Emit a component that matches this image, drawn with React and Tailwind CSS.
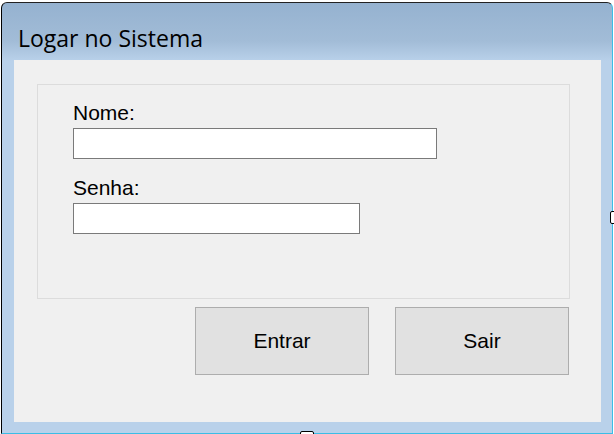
import React from 'react';

// Windows 7 style login dialog
const labelFont = { fontFamily: '"Liberation Sans", Arial, sans-serif' };

const Field = ({ label, width, first }) => (
  <div className={first ? '' : 'mt-[17px]'}>
    <div className="h-[24px] text-[21px] leading-[24px] text-black" style={labelFont}>
      {label}
    </div>
    <input
      type="text"
      className={`mt-[3px] block h-[31px] ${width} border border-[#7a7a7a] bg-white outline-none`}
    />
  </div>
);

const App = () => {
  return (
    <div className="relative h-[434px] w-[614px] overflow-hidden bg-white">
      <div className="ml-[1px] mt-[2px] flex h-[432px] w-[612px] flex-col rounded-t-[6px] border-l border-t border-r border-b border-l-black border-t-[#222] border-r-[#3bbde6] border-b-[#3bbde6] bg-[linear-gradient(to_bottom,#95b2d0_0px,#a2bcd7_38px,#b9d1ea_58px,#b9d1ea_100%)]">
        {/* Title bar */}
        <div className="flex h-[57px] items-start pl-[16px] pt-[21px]">
          <span
            className="text-[23px] leading-[28px] text-black"
            style={{ fontFamily: '"Open Sans", "Noto Sans", sans-serif' }}
          >
            Logar no Sistema
          </span>
        </div>

        {/* Client area */}
        <div className="ml-[12px] h-[362px] w-[587px] bg-[#f0f0f0] pl-[23px] pt-[24px]">
          <div className="h-[215px] w-[533px] border border-[#dcdcdc] pl-[35px] pt-[16px]">
            <Field label="Nome:" width="w-[364px]" first />
            <Field label="Senha:" width="w-[287px]" />
          </div>

          <div className="mt-[8px] flex w-[533px] justify-end gap-[26px] pr-[1px]">
            <button
              className="h-[68px] w-[174px] border border-[#adadad] bg-[#e1e1e1] text-[21px] text-black"
              style={labelFont}
            >
              Entrar
            </button>
            <button
              className="h-[68px] w-[174px] border border-[#adadad] bg-[#e1e1e1] text-[21px] text-black"
              style={labelFont}
            >
              Sair
            </button>
          </div>
        </div>
      </div>

      {/* resize handles */}
      <div className="absolute left-[610px] top-[211px] h-[13px] w-[6px] rounded-[2px] border border-black bg-white" />
      <div className="absolute left-[300px] top-[431px] h-[6px] w-[14px] rounded-[2px] border border-black bg-white" />
    </div>
  );
};

export default App;
